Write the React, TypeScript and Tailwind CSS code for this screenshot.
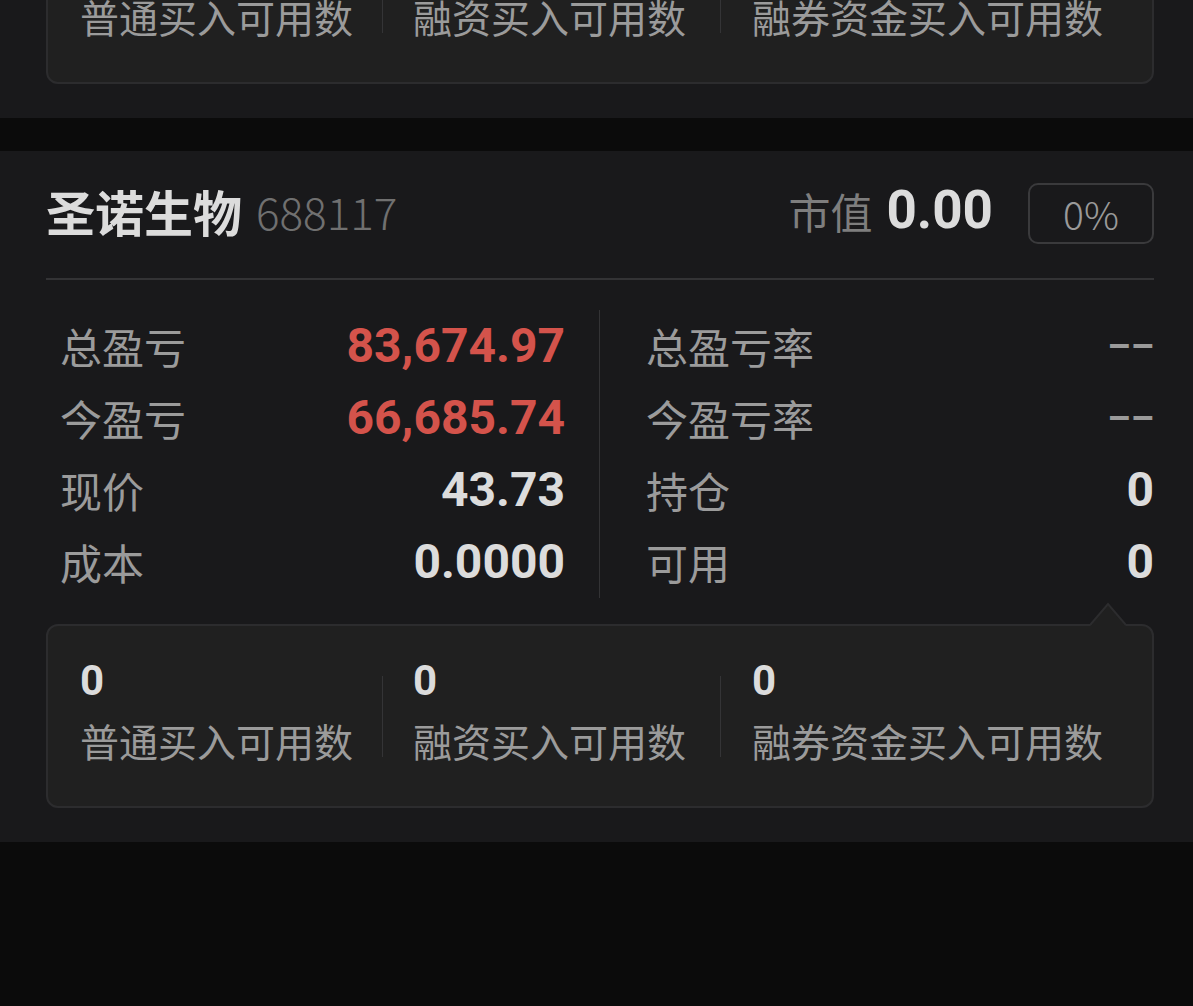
import React from "react";

interface Position {
	name: string;
	code: string;
	marketValue: string;
	ratio: string;
	totalPnl: string;
	todayPnl: string;
	price: string;
	cost: string;
	totalRate: string;
	todayRate: string;
	holding: string;
	available: string;
	normalBuy: string;
	marginBuy: string;
	shortBuy: string;
}

const positions: Position[] = [
	{
		name: "华熙生物",
		code: "688363",
		marketValue: "0.00",
		ratio: "0%",
		totalPnl: "12,408.30",
		todayPnl: "1,024.55",
		price: "58.20",
		cost: "0.0000",
		totalRate: "--",
		todayRate: "--",
		holding: "0",
		available: "0",
		normalBuy: "0",
		marginBuy: "0",
		shortBuy: "0",
	},
	{
		name: "圣诺生物",
		code: "688117",
		marketValue: "0.00",
		ratio: "0%",
		totalPnl: "83,674.97",
		todayPnl: "66,685.74",
		price: "43.73",
		cost: "0.0000",
		totalRate: "--",
		todayRate: "--",
		holding: "0",
		available: "0",
		normalBuy: "0",
		marginBuy: "0",
		shortBuy: "0",
	},
];

const cjk = { fontFamily: '"Noto Sans CJK SC", "Noto Sans", sans-serif' };
const num = { fontFamily: 'Roboto, "Noto Sans CJK SC", sans-serif' };

const Value: React.FC<{ text: string; red?: boolean }> = ({ text, red }) => {
	if (text === "--") {
		return (
			<span style={num} className="text-[37px] font-bold leading-none text-[#9a9a9a]">
				––
			</span>
		);
	}
	return (
		<span
			style={num}
			className={`text-[48px] font-bold leading-none ${red ? "text-[#d4534b]" : "text-[#dcdcdc]"}`}
		>
			{text}
		</span>
	);
};

const Row: React.FC<{ label: string; children: React.ReactNode }> = ({ label, children }) => (
	<div className="flex h-[72px] items-center justify-between">
		<span style={cjk} className="text-[42px] leading-none text-[#9b9b9b]">
			{label}
		</span>
		{children}
	</div>
);

const BuyItem: React.FC<{ value: string; label: string }> = ({ value, label }) => (
	<div className="flex flex-col">
		<span style={num} className="text-[42px] font-bold leading-[48px] text-[#dcdcdc]">
			{value}
		</span>
		<span style={cjk} className="mt-[11px] whitespace-nowrap text-[39px] leading-[48px] text-[#9b9b9b]">
			{label}
		</span>
	</div>
);

const PositionCard: React.FC<{ p: Position }> = ({ p }) => (
	<section className="bg-[#19191b] pb-[34px] pl-[46px] pr-[39px]">
		{/* Header */}
		<div className="flex h-[129px] items-center border-b-2 border-[#333335] pb-[8px]">
			<span style={cjk} className="text-[49px] font-bold leading-none text-[#dcdcdc]">
				{p.name}
			</span>
			<span style={cjk} className="ml-[14px] text-[44px] font-light leading-none text-[#707070]">
				{p.code}
			</span>
			<div className="ml-auto flex items-center">
				<span style={cjk} className="text-[42px] leading-none text-[#7e7e7e]">
					市值
				</span>
				<span style={num} className="ml-[14px] text-[53px] font-bold leading-none text-[#dcdcdc]">
					{p.marketValue}
				</span>
				<span
					style={cjk}
					className="ml-[35px] mt-[6px] flex h-[61px] w-[126px] items-center justify-center rounded-[10px] border-2 border-[#3a3a3c] text-[39px] font-light text-[#9a9a9a]"
				>
					{p.ratio}
				</span>
			</div>
		</div>

		{/* Figures */}
		<div className="flex pt-[30px]">
			<div className="w-[554px] border-r border-[#333335] pl-[14px] pr-[34px]">
				<Row label="总盈亏">
					<Value text={p.totalPnl} red />
				</Row>
				<Row label="今盈亏">
					<Value text={p.todayPnl} red />
				</Row>
				<Row label="现价">
					<Value text={p.price} />
				</Row>
				<Row label="成本">
					<Value text={p.cost} />
				</Row>
			</div>
			<div className="flex-1 pl-[46px]">
				<Row label="总盈亏率">
					<Value text={p.totalRate} />
				</Row>
				<Row label="今盈亏率">
					<Value text={p.todayRate} />
				</Row>
				<Row label="持仓">
					<Value text={p.holding} />
				</Row>
				<Row label="可用">
					<Value text={p.available} />
				</Row>
			</div>
		</div>

		{/* Buy availability */}
		<div className="relative mt-[26px] rounded-[12px] border-2 border-[#2c2c2e] bg-[#202020]">
			<svg
				className="absolute right-[26px] top-[-24px]"
				width="36"
				height="24"
				viewBox="0 0 36 24"
			>
				<polygon points="0,24 18,2 36,24" fill="#202020" />
				<polyline points="0,23 18,2 36,23" fill="none" stroke="#2c2c2e" strokeWidth="2" />
			</svg>
			<div className="flex pb-[42px] pl-[32px] pt-[31px]">
				<div className="w-[302px]">
					<BuyItem value={p.normalBuy} label="普通买入可用数" />
				</div>
				<div className="mb-[7px] h-[81px] w-px self-end bg-[#343436]" />
				<div className="w-[337px] pl-[30px]">
					<BuyItem value={p.marginBuy} label="融资买入可用数" />
				</div>
				<div className="mb-[7px] h-[81px] w-px self-end bg-[#343436]" />
				<div className="pl-[31px]">
					<BuyItem value={p.shortBuy} label="融券资金买入可用数" />
				</div>
			</div>
		</div>
	</section>
);

export default function App() {
	return (
		<div className="h-[1006px] overflow-hidden bg-[#0b0b0b]">
			<div className="mt-[-573px] flex flex-col gap-[33px]">
				{positions.map((p) => (
					<PositionCard key={p.code} p={p} />
				))}
			</div>
		</div>
	);
}
